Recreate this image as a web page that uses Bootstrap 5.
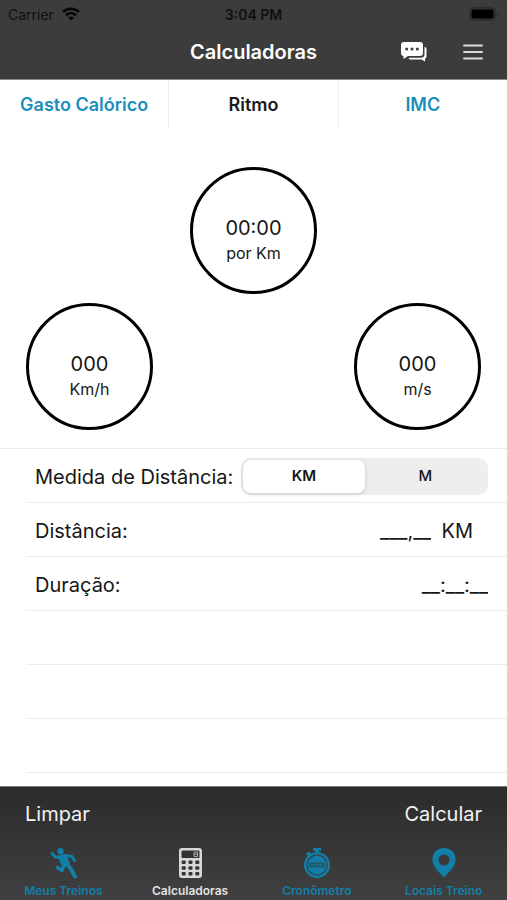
<!DOCTYPE html>
<html lang="pt-BR">
<head>
<meta charset="utf-8">
<meta name="viewport" content="width=device-width, initial-scale=1">
<title>Calculadoras</title>
<link href="https://cdn.jsdelivr.net/npm/bootstrap@5.3.0/dist/css/bootstrap.min.css" rel="stylesheet">
<style>
  body { font-family: Inter, "Liberation Sans", sans-serif; color: #161616; background: #fff; }
  .app-head { background: #3c3c3c; border-bottom: 1px solid #8a8a8a; }
  .status-bar { height: 28px; font-size: 14px; color: #101010; }
  .status-time { font-weight: 600; }
  .title-bar { height: 51px; padding-bottom: 3px; }
  .title-bar h1 { font-size: 20px; font-weight: 600; color: #fff; }
  .head-actions { gap: 36px; }
  .side { flex: 1 1 0; }
  .icon-btn { background: none; border: 0; padding: 0; line-height: 0; }
  .calc-tabs { height: 48px; }
  .calc-tabs a { font-size: 18px; font-weight: 600; color: #1b8fbb; text-decoration: none; }
  .calc-tabs a + a { border-left: 1px solid #ececec; }
  .calc-tabs a.active { color: #1a1a1a; }
  .gauges { padding: 39px 26px 18px; }
  .gauge { width: 127px; height: 127px; border: 3px solid #000; border-radius: 50%; padding-top: 18px; }
  .gauge output { font-size: 20px; line-height: 27px; }
  .gauge span { font-size: 16px; line-height: 22px; }
  .gauge-row { margin-top: 9px; }
  .form-rows { border-top: 1px solid #ececec; }
  .form-line { height: 54px; margin-left: 26px; padding: 2px 19px 0 9px; border-bottom: 1px solid #ececec; font-size: 20px; }
  .segments { height: 37px; background: #eee; border-radius: 10px; padding: 2px; margin-left: 8px; }
  .segments label { font-size: 15px; font-weight: 500; border-radius: 8px; }
  .segments .btn-check:checked + label { background: #fff; font-weight: 600; box-shadow: 0 1px 4px rgba(0,0,0,.16); }
  .entry { border: 0; padding: 0; background: none; text-align: right; color: inherit; width: 100px; font-size: 20px; }
  .unit { margin: 0 15px 0 10px; }
  .app-foot { background: linear-gradient(#2b2b2b, #404040); border-top: 1px solid #777; }
  .actions { height: 54px; padding: 0 25px; }
  .actions button { background: none; border: 0; padding: 0; color: #f2f2f2; font-size: 20px; }
  .bottom-nav { height: 59px; }
  .bottom-nav a { color: #127fa8; text-decoration: none; font-size: 12px; line-height: 16px; font-weight: 600; padding-top: 6px; }
  .bottom-nav a.active { color: #e2e2e2; }
  .bottom-nav svg { display: block; margin-bottom: 4px; }
</style>
<script src="https://cdn.jsdelivr.net/npm/bootstrap@5.3.0/dist/js/bootstrap.bundle.min.js"></script>
</head>
<body class="d-flex flex-column min-vh-100">
<header class="app-head">
  <div class="status-bar d-flex align-items-center px-2">
    <div class="side d-flex align-items-center gap-2">
      <span>Carrier</span>
      <svg width="18" height="14" viewBox="0 0 18 14" fill="none" stroke="#050505" stroke-width="2.6" aria-hidden="true"><path d="M1 5C5.500 .6 12.500 .6 17 5M4 8.200c2.900-2.700 7.100-2.700 10 0"/><path d="M9 13.600 6 10.600c1.700-1.500 4.300-1.500 6 0z" fill="#050505" stroke="none"/></svg>
    </div>
    <span class="status-time">3:04 PM</span>
    <div class="side d-flex justify-content-end">
      <svg width="30" height="14" viewBox="0 0 30 14" aria-hidden="true"><rect x=".5" y=".5" width="26" height="13" rx="4" fill="#303030" stroke="#2c2c2c"/><rect x="2.500" y="2.500" width="22" height="9" rx="2.500"/><path d="M28 5c1.600.6 1.600 3.400 0 4z" fill="#222"/></svg>
    </div>
  </div>
  <div class="title-bar d-flex align-items-center px-4">
    <div class="side"></div>
    <h1 class="m-0">Calculadoras</h1>
    <div class="side head-actions d-flex justify-content-end align-items-center">
      <button class="icon-btn" type="button" aria-label="Mensagens">
        <svg width="26" height="20" viewBox="0 0 26 20" fill="#fff" aria-hidden="true"><path d="M3 0h16a3 3 0 0 1 3 3v8a3 3 0 0 1-3 3H7l-4.500 3v-3A3 3 0 0 1 0 11V3a3 3 0 0 1 3-3z"/><path d="M23.500 5c1.300 0 2 .8 2 2v7.500c0 1.300-.7 2-1.500 2.300V19.500L20.500 17.500H10c-1.300 0-2-.5-2.300-1.800H20c2.300 0 3.500-1.200 3.500-3.500z"/><g fill="#3c3c3c"><circle cx="5.700" cy="7" r="1.500"/><circle cx="11" cy="7" r="1.500"/><circle cx="16.300" cy="7" r="1.500"/></g></svg>
      </button>
      <button class="icon-btn" type="button" aria-label="Menu">
        <svg width="20" height="16" viewBox="0 0 20 16" stroke="#dedede" stroke-width="1.800" stroke-linecap="round" aria-hidden="true"><path d="M1 1.500h18M1 8h18M1 14.500h18"/></svg>
      </button>
    </div>
  </div>
</header>

<main class="flex-grow-1">
  <nav class="calc-tabs d-flex" aria-label="Tipo de cálculo">
    <a class="side d-flex align-items-center justify-content-center" href="#gasto">Gasto Calórico</a>
    <a class="side d-flex align-items-center justify-content-center active" href="#ritmo" aria-current="page">Ritmo</a>
    <a class="side d-flex align-items-center justify-content-center" href="#imc">IMC</a>
  </nav>

  <section class="gauges">
    <div class="d-flex justify-content-center">
      <div class="gauge d-flex flex-column align-items-center justify-content-center"><output>00:00</output><span>por Km</span></div>
    </div>
    <div class="gauge-row d-flex justify-content-between">
      <div class="gauge d-flex flex-column align-items-center justify-content-center"><output>000</output><span>Km/h</span></div>
      <div class="gauge d-flex flex-column align-items-center justify-content-center"><output>000</output><span>m/s</span></div>
    </div>
  </section>

  <form class="form-rows" id="ritmo">
    <div class="form-line d-flex align-items-center">
      <span id="measure">Medida de Distância:</span>
      <div class="segments d-flex flex-grow-1" role="group" aria-labelledby="measure">
        <input class="btn-check" type="radio" name="unit" id="unit-km" checked>
        <label class="side d-flex align-items-center justify-content-center" for="unit-km">KM</label>
        <input class="btn-check" type="radio" name="unit" id="unit-m">
        <label class="side d-flex align-items-center justify-content-center" for="unit-m">M</label>
      </div>
    </div>
    <div class="form-line d-flex align-items-center">
      <label class="me-auto" for="distance">Distância:</label>
      <input class="entry" id="distance" type="text" value="___,__">
      <span class="unit">KM</span>
    </div>
    <div class="form-line d-flex align-items-center">
      <label class="me-auto" for="duration">Duração:</label>
      <input class="entry" id="duration" type="text" value="__:__:__">
    </div>
    <div class="form-line"></div>
    <div class="form-line"></div>
    <div class="form-line"></div>
  </form>
</main>

<footer class="app-foot">
  <div class="actions d-flex justify-content-between align-items-center">
    <button type="reset" form="ritmo">Limpar</button>
    <button type="submit" form="ritmo">Calcular</button>
  </div>
  <nav class="bottom-nav d-flex" aria-label="Principal">
    <a class="side d-flex flex-column align-items-center" href="#treinos">
      <svg width="30" height="32" viewBox="0 0 30 32" fill="none" stroke="currentColor" stroke-linecap="round" stroke-linejoin="round" aria-hidden="true"><circle cx="12.500" cy="4.200" r="3.200" fill="currentColor" stroke="none"/><path d="M10.500 9.500l6.500-1.500 4 8-5.500 4z" fill="currentColor" stroke-width="2"/><path d="M13 10 8 10.500 4 6.500M17 8.500 24 9.500 26.500 13.500" stroke-width="3"/><path d="M16 18l-2 5.500-4.500-3" stroke-width="3.600"/><path d="M18.500 17l4.500 5 4 7.500" stroke-width="4"/></svg>
      Meus Treinos
    </a>
    <a class="side d-flex flex-column align-items-center active" href="#calculadoras" aria-current="page">
      <svg width="30" height="32" viewBox="0 0 30 32" aria-hidden="true"><rect x="4" y="1" width="23" height="30" rx="3" fill="#d8d8d8"/><rect x="6.500" y="3.500" width="18" height="7.500" rx="1" fill="#333"/><path d="M19 5h3.500v4.500h-3.500zM19 7.200h3.500" fill="none" stroke="#aaa"/><g fill="#333"><rect x="6.700" y="13.500" width="4" height="3.500" rx="1"/><rect x="13.500" y="13.500" width="4" height="3.500" rx="1"/><rect x="20.300" y="13.500" width="4" height="3.500" rx="1"/><rect x="6.700" y="19.200" width="4" height="3.500" rx="1"/><rect x="13.500" y="19.200" width="4" height="3.500" rx="1"/><rect x="20.300" y="19.200" width="4" height="3.500" rx="1"/><rect x="6.700" y="25" width="4" height="3.500" rx="1"/><rect x="13.500" y="25" width="4" height="3.500" rx="1"/><rect x="20.300" y="25" width="4" height="3.500" rx="1"/></g></svg>
      Calculadoras
    </a>
    <a class="side d-flex flex-column align-items-center" href="#cronometro">
      <svg width="30" height="32" viewBox="0 0 30 32" aria-hidden="true"><g fill="currentColor"><path d="M11 1h8v2.500h-2V6h-4V3.500h-2zM4 6.500l3-2 2 2.200-3 2.300z"/><circle cx="15" cy="18" r="13"/></g><circle cx="15" cy="18" r="10" fill="none" stroke="#2f4a55" stroke-width="1.300"/><rect x="7" y="15.500" width="16" height="5" rx="1" fill="#24576a"/><path d="M9 18h12" stroke="#127fa8" stroke-width="1.500" stroke-dasharray="2 1"/></svg>
      Cronômetro
    </a>
    <a class="side d-flex flex-column align-items-center" href="#locais">
      <svg width="30" height="32" viewBox="0 0 30 32" fill="currentColor" fill-rule="evenodd" aria-hidden="true"><path d="M15 1C8 1 3.300 6 3.300 12.500 3.300 19.500 11 26 15 30.500c4-4.500 11.700-11 11.700-18C26.700 6 22 1 15 1zm0 6.500a5.500 5.500 0 1 1 0 11 5.500 5.500 0 0 1 0-11z"/></svg>
      Locais Treino
    </a>
  </nav>
</footer>
</body>
</html>
